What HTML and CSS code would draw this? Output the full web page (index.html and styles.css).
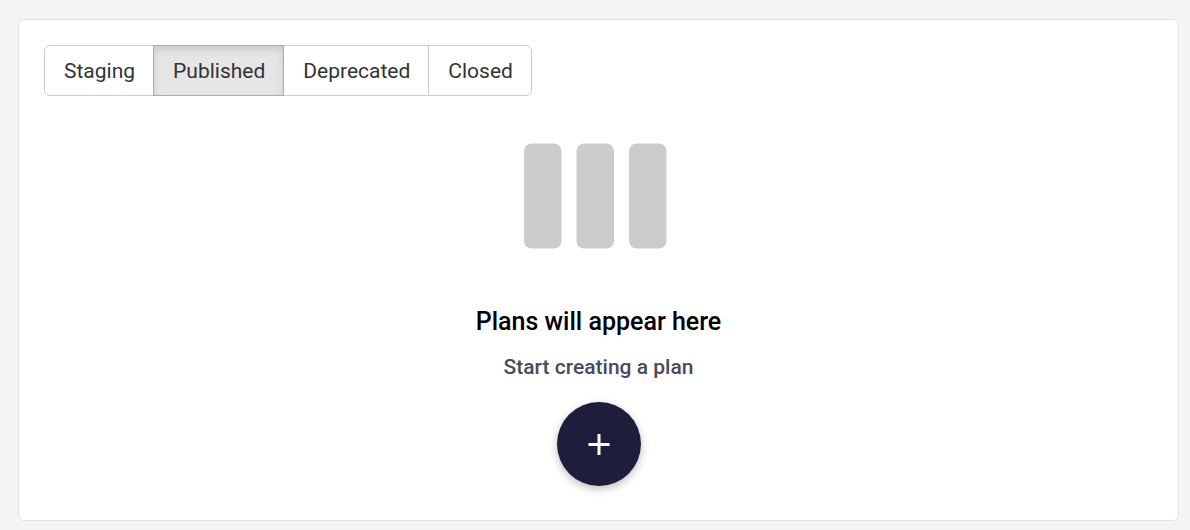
FILE: index.html
```html
<!DOCTYPE html>
<html lang="en">
<head>
<meta charset="utf-8">
<meta name="viewport" content="width=device-width, initial-scale=1">
<title>Plans</title>
<link rel="stylesheet" href="styles.css">
</head>
<body>
<main class="card">
  <div class="tabs" role="group" aria-label="Plan status">
    <button class="tab" type="button">Staging</button>
    <button class="tab tab-active" type="button" aria-pressed="true">Published</button>
    <button class="tab" type="button">Deprecated</button>
    <button class="tab" type="button">Closed</button>
  </div>
  <section class="empty">
    <svg class="columns" viewBox="0 0 150 106" aria-hidden="true">
      <rect x="0" y="0.5" width="37.5" height="105" rx="7.5"/>
      <rect x="52.5" y="0.5" width="37.5" height="105" rx="7.5"/>
      <rect x="105" y="0.5" width="37.5" height="105" rx="7.5"/>
    </svg>
    <h1 class="title">Plans will appear here</h1>
    <p class="subtitle">Start creating a plan</p>
    <button class="add" type="button" aria-label="Create a plan">
      <svg class="plus" viewBox="0 0 22 22" aria-hidden="true"><path d="M0.5 11.5H21.5M11 1V22"/></svg>
    </button>
  </section>
</main>
</body>
</html>
```
FILE: styles.css
```css
* {
  box-sizing: border-box;
}

body {
  margin: 0;
  padding: 19px 11px 9px 18px;
  background: #f5f5f5;
  font-family: Roboto, "Liberation Sans", sans-serif;
}

.card {
  padding: 25px 25px 34px;
  background: #fff;
  border: 1px solid #e3e3e3;
  border-radius: 6px;
}

.tabs {
  display: flex;
  width: fit-content;
}

.tab {
  margin: 0 0 0 -1px;
  padding: 13px 18px 11px 19px;
  border: 1px solid #ccc;
  background: #fff;
  color: #333;
  font: 400 21px/25px Roboto, "Liberation Sans", sans-serif;
  cursor: pointer;
}

.tab:first-child {
  margin-left: 0;
  border-radius: 6px 0 0 6px;
}

.tab:last-child {
  border-radius: 0 6px 6px 0;
}

.tab-active {
  z-index: 1;
  background: #e6e6e6;
  border-color: #adadad;
  box-shadow: inset 0 4px 7px rgba(0, 0, 0, 0.125);
}

.empty {
  display: flex;
  flex-direction: column;
  align-items: center;
  padding-top: 47px;
}

.columns {
  width: 150px;
  height: 106px;
  fill: #ccc;
}

.title {
  margin: 56px 0 0;
  color: #000;
  font-size: 25px;
  font-weight: 500;
  line-height: 34px;
}

.subtitle {
  margin: 14px 0 0;
  color: #4a4a5a;
  font-size: 21px;
  font-weight: 500;
  line-height: 28px;
}

.add {
  display: flex;
  align-items: center;
  justify-content: center;
  width: 84px;
  height: 84px;
  margin-top: 21px;
  padding: 0;
  border: 0;
  border-radius: 50%;
  background: #1e1e3c;
  box-shadow: 0 3px 8px rgba(0, 0, 0, 0.26);
  cursor: pointer;
}

.plus {
  width: 22px;
  height: 22px;
  fill: none;
  stroke: #fff;
  stroke-width: 3;
}
```
